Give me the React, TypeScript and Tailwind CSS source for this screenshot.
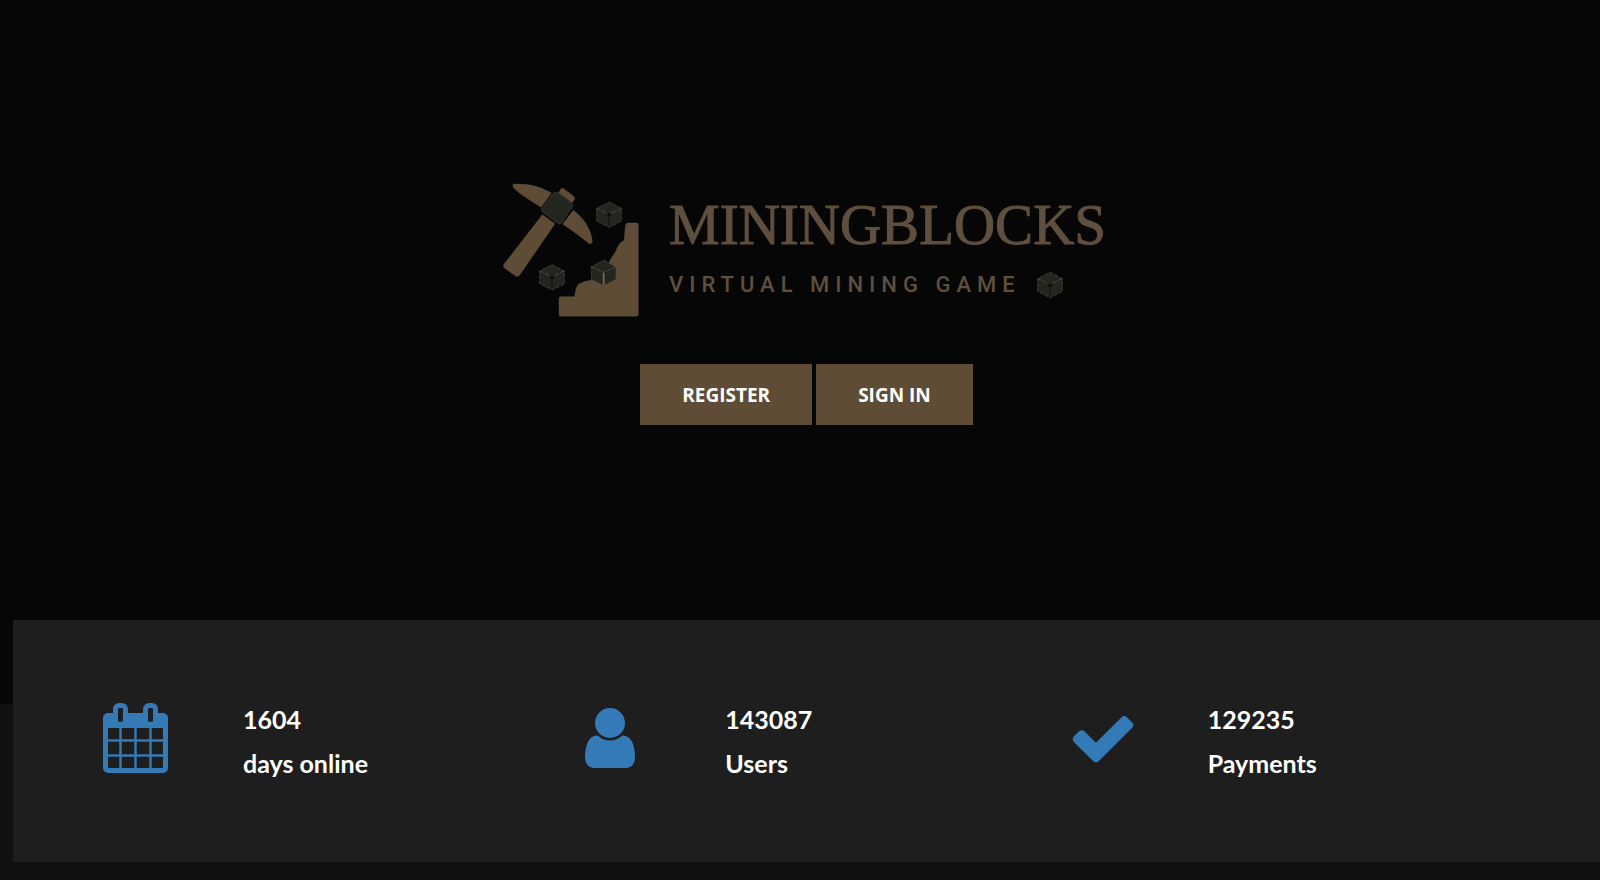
import type { ReactNode } from 'react'

const stats = [
  {
    value: '1604',
    label: 'days online',
    viewBox: '64 0 1664 1792',
    size: 'w-[65px]',
    path: 'M192 1664h288v-288h-288v288zm352 0h320v-288h-320v288zm-352-352h288v-320h-288v320zm352 0h320v-320h-320v320zm-352-384h288v-288h-288v288zm736 736h320v-288h-320v288zm-384-736h320v-288h-320v288zm768 736h288v-288h-288v288zm-384-352h320v-320h-320v320zm-352-864v-288q0-13-9.5-22.5t-22.5-9.5h-64q-13 0-22.5 9.5t-9.5 22.5v288q0 13 9.5 22.5t22.5 9.5h64q13 0 22.5-9.5t9.5-22.5zm736 864h288v-320h-288v320zm-384-384h320v-288h-320v288zm384 0h288v-288h-288v288zm32-480v-288q0-13-9.5-22.5t-22.5-9.5h-64q-13 0-22.5 9.5t-9.5 22.5v288q0 13 9.5 22.5t22.5 9.5h64q13 0 22.5-9.5t9.5-22.5zm384-64v1280q0 52-38 90t-90 38h-1408q-52 0-90-38t-38-90v-1280q0-52 38-90t90-38h128v-96q0-66 47-113t113-47h64q66 0 113 47t47 113v96h384v-96q0-66 47-113t113-47h64q66 0 113 47t47 113v96h128q52 0 90 38t38 90z',
  },
  {
    value: '143087',
    label: 'Users',
    viewBox: '256 0 1280 1792',
    size: 'w-[50px]',
    path: 'M1536 1399q0 109-62.5 187t-150.5 78h-854q-88 0-150.5-78t-62.5-187q0-85 8.5-160.5t31.5-152 58.5-131 94-89 134.5-34.5q131 128 313 128t313-128q76 0 134.5 34.5t94 89 58.5 131 31.5 152 8.5 160.5zm-256-887q0 159-112.5 271.5t-271.5 112.5-271.5-112.5-112.5-271.5 112.5-271.5 271.5-112.5 271.5 112.5 112.5 271.5z',
  },
  {
    value: '129235',
    label: 'Payments',
    viewBox: '0 0 1792 1792',
    size: 'w-[70px]',
    path: 'M1671 566q0 40-28 68l-724 724-136 136q-28 28-68 28t-68-28l-136-136-362-362q-28-28-28-68t28-68l136-136q28-28 68-28t68 28l294 295 656-657q28-28 68-28t68 28l136 136q28 28 28 68z',
  },
]

function Cube({ x, y, lit = false }: { x: number; y: number; lit?: boolean }) {
  return (
    <g transform={`translate(${x} ${y})`}>
      <path d="M0-38 37-19V19L0 38-37 19V-19Z" fill="#23251f" />
      <path
        d="M0-38 37-19V19L0 38-37 19V-19Z"
        fill="none"
        stroke="#55534d"
        strokeWidth="2"
        strokeDasharray="12 4"
      />
      <path d="M-37-19 0-2 37-19" fill="none" stroke={lit ? '#5e4c37' : '#4b4a44'} strokeWidth="3" strokeDasharray="13 4" />
      <path d="M0 0V36" stroke={lit ? '#7b6a52' : '#10110f'} strokeWidth={lit ? 5 : 3} />
      {!lit && <circle r="6" fill="#0c0d0b" />}
    </g>
  )
}

function LogoMark() {
  return (
    <svg viewBox="38 40 408 402" className="h-[134px] w-[136px] shrink-0" aria-hidden="true">
      <g fill="#5e4c37" stroke="#6a5d4c" strokeWidth="1">
        <path d="M68 44C105 40 150 50 183 70L152 113C125 94 90 76 70 54Q66 48 68 44Z" />
        <path d="M205 69 212 58Q216 54 221 58L250 80Q255 84 252 90L245 99Z" />
        <path d="M249 122C280 145 303 180 306 216Q304 224 297 222C270 200 245 182 217 163Z" />
        <path d="M156 135 194 162 88 316Q83 323 76 319L42 295Q37 290 41 284Z" />
        <path d="M410 160H440Q444 160 444 165V434Q444 440 438 440H212Q206 440 206 434V387Q206 381 212 381H253Q256 352 265 344 282 334 301 332L330 330 358 275C364 262 378 246 382 232 388 220 394 214 401 213L405 172Q406 162 410 160Z" />
      </g>
      <path d="M196 68Q199 67 202 69L245 103Q248 107 246 111L213 160Q209 165 204 162L156 126Q152 122 154 117L188 71Z" fill="#23251f" stroke="#45433b" strokeWidth="2" />
      <Cube x={356} y={135} />
      <Cube x={185} y={323} />
      <Cube x={340} y={310} lit />
    </svg>
  )
}

function Logo() {
  return (
    <div className="flex items-center gap-[30px] pr-1">
      <LogoMark />
      <div className="flex flex-col gap-[6px] text-[#5e4f3e]">
        <h1 className="font-['Liberation_Serif',serif] text-[57px] leading-[64px] [-webkit-text-stroke:1px_#5e4f3e]">
          MININGBLOCKS
        </h1>
        <div className="flex items-center gap-4">
          <p className="font-['Roboto',sans-serif] text-[22px] leading-[44px] font-medium tracking-[6px] whitespace-nowrap">
            VIRTUAL MINING GAME
          </p>
          <svg viewBox="-39 -39 78 78" className="size-[26px]" aria-hidden="true">
            <Cube x={0} y={0} />
          </svg>
        </div>
      </div>
    </div>
  )
}

function HeroButton({ children }: { children: ReactNode }) {
  return (
    <button
      type="button"
      className="cursor-pointer bg-[#5e4c37] px-[42px] pt-[17px] pb-[15px] font-['Open_Sans',sans-serif] text-[19px] leading-[29px] font-bold text-white uppercase"
    >
      {children}
    </button>
  )
}

export default function App() {
  return (
    <div className="min-h-screen bg-[#111111] pb-[18px] font-['Lato',sans-serif] text-white">
      <header className="flex min-h-[80vh] flex-col items-center gap-[47px] bg-[#060606] pt-[183px] pl-[13px]">
        <Logo />
        <div className="flex gap-1">
          <HeroButton>Register</HeroButton>
          <HeroButton>Sign in</HeroButton>
        </div>
      </header>

      {/* Stats panel, pulled up over the hero */}
      <section className="-mt-[84px] ml-[13px] bg-[#1e1e1e] py-[77px] pr-[50px] pl-[90px]">
        <div className="grid grid-cols-3">
          {stats.map((stat) => (
            <div key={stat.label} className="flex">
              <div className="w-[140px] shrink-0 pt-[6px]">
                <svg viewBox={stat.viewBox} className={`h-[70px] fill-[#337ab7] ${stat.size}`} aria-hidden="true">
                  <path d={stat.path} />
                </svg>
              </div>
              <div className="text-[25px] leading-[44px] font-bold">
                <p>{stat.value}</p>
                <p>{stat.label}</p>
              </div>
            </div>
          ))}
        </div>
      </section>
    </div>
  )
}
